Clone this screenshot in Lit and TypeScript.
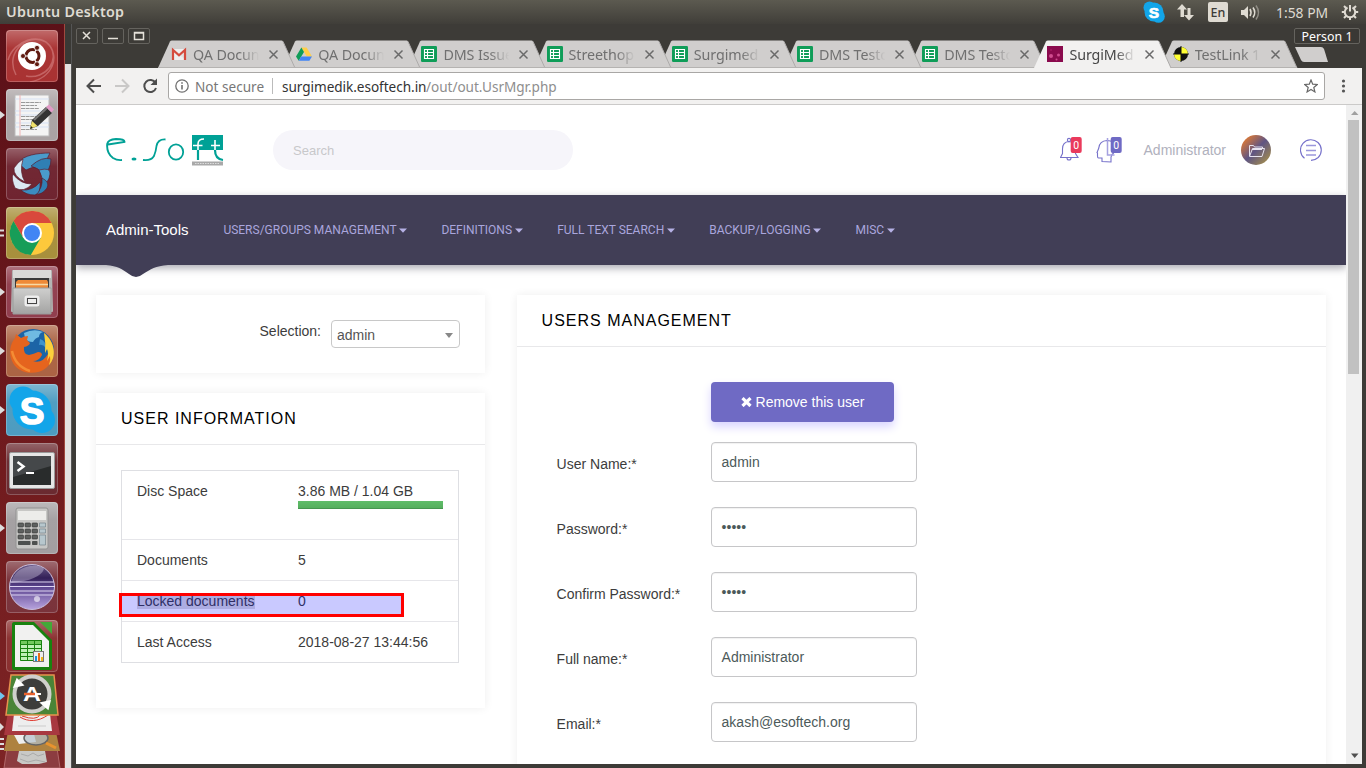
import { LitElement, html, css, svg, TemplateResult } from "lit";
import { customElement, property } from "lit/decorators.js";

const sheet = svg`<rect width="16" height="16" rx="1.2" fill="#0f9d58"/><path d="M3.5 3.5h9v9h-9zM3.5 6.5h9M3.5 9.5h9M6.5 3.5v9" fill="none" stroke="#fff" stroke-width="1.1"/>`;
const gmail = svg`<path d="M1 3h14v11H1z" fill="#eee"/><path d="M1 3l7 6 7-6v11" fill="#d9d9d9" opacity=".6"/><path d="M2 14V4l6 5.3L14 4v10" fill="none" stroke="#d54b3d" stroke-width="2.2"/>`;
const drive = svg`<path d="M5.4 1.5h5.2L16 10.6h-5.2z" fill="#ffcf48"/><path d="M5.4 1.5L0 10.6l2.7 4.2L8 6z" fill="#0f9d58"/><path d="M5.2 10.6H16l-2.6 4.2H2.7z" fill="#4285f4"/>`;
const surgi = svg`<rect width="16" height="16" fill="#8a0a4d"/><circle cx="4" cy="10" r="2" fill="#d04c8f"/><circle cx="11.500" cy="9" r="1.500" fill="#d04c8f"/><circle cx="9.500" cy="13.500" r="1" fill="#d04c8f"/><circle cx="4" cy="4" r=".8" fill="#b5286d"/>`;
const testlink = svg`<circle cx="8" cy="8" r="7" fill="#111"/><path d="M8 8V1A7 7 0 0 1 15 8zM8 8v7A7 7 0 0 1 1 8z" fill="#ff3"/><path d="M8 0v16M0 8h16" stroke="#111" stroke-width="1"/>`;

const TABS: [string, TemplateResult, boolean?][] = [
  ["QA Docun", gmail],
  ["QA Docun", drive],
  ["DMS Issue", sheet],
  ["Streethop", sheet],
  ["Surgimed", sheet],
  ["DMS Testc", sheet],
  ["DMS Testc", sheet],
  ["SurgiMed", surgi, true],
  ["TestLink 1", testlink],
];

@customElement("browser-tab")
class BrowserTab extends LitElement {
  @property() label = "";
  @property({ type: Boolean }) active = false;
  @property({ attribute: false }) icon: TemplateResult | null = null;
  static styles = css`
    :host { display: block; position: relative; width: 138px; height: 28px; margin-right: -12.8px; flex: none; }
    :host(:last-child) { margin-right: 0; }
    .shape { position: absolute; left: 0; top: 0; }
    .row { position: relative; display: flex; align-items: center; height: 28px; padding-left: 13px; }
    .fav { width: 16px; height: 16px; margin-right: 6px; flex: none; }
    .t { width: 69px; overflow: hidden; white-space: nowrap; font: 14.3px "Noto Sans", sans-serif; letter-spacing: -.1px; color: #707070;
      -webkit-mask-image: linear-gradient(90deg, #000 68%, transparent 96%); }
    :host([active]) .t { color: #474747; }
    .x { margin-left: 6px; width: 11px; height: 11px; }
  `;
  render() {
    const fill = this.active ? "#f2f1f0" : "#d0cecd";
    return html`
      <svg class="shape" width="138" height="28"><path d="M0 28L12 1.500Q12.500 .5 14 .5H123.500Q124.500 .5 125 1.500L137 28z" fill=${fill}/>
        <path d="M125 1.500L137 28" stroke="#adabaa" fill="none"/>
        ${this.active ? "" : svg`<path d="M0 27.500H137" stroke="#b5b3b1"/>`}</svg>
      <div class="row"><svg class="fav" viewBox="0 0 16 16">${this.icon}</svg><span class="t">${this.label}</span>
        <svg class="x" viewBox="0 0 11 11"><path d="M1.500 1.500l8 8M9.500 1.500l-8 8" stroke="#6a6a6a" stroke-width="1.500"/></svg></div>`;
  }
}

/* Launcher tiles: background colour, marker on the left edge, drawing on a 52px grid */
const LAUNCHER: [string, string, TemplateResult][] = [
  ["#a93232", "", svg`<path d="M10 45C-2 22 22 2 40 12c16 14 6 36-16 40M2 30C8 10 34 2 44 16s-4 34-24 30" fill="none" stroke="#d98a8a" stroke-width="1.500" opacity=".55"/>
    <circle cx="26" cy="26" r="14" fill="#fff"/><circle cx="26.500" cy="26" r="6.500" fill="none" stroke="#601a10" stroke-width="3"/>
    <path d="M26.500 26H16M26.500 26l5.500-9.500M26.500 26l5.500 9.500" stroke="#fff" stroke-width="1.200"/>
    <g fill="#601a10" stroke="#fff" stroke-width=".8"><circle cx="17" cy="26" r="2.500"/><circle cx="31" cy="17.800" r="2.500"/><circle cx="31" cy="34.200" r="2.500"/></g>`],
  ["#aaa3a4", "a", svg`<rect x="9" y="6" width="34" height="41" fill="#f4f4f4" stroke="#bbb"/><path d="M9 10h34M9 22h34M9 26h34M9 34h34M9 38h34" stroke="#d5e1f4"/><path d="M14 6v41" stroke="#f0b4b4"/>
    <path d="M15 13.500h20M15 16.500h16M15 19.500h18M15 27.500h15M15 30.500h16M15 36.500h10M15 40.500h16" stroke="#999" stroke-width="1" stroke-dasharray="4 .6"/>
    <path d="M24 40l2-9 14-13 6 6-14 13z" fill="#333"/><path d="M28 31l14-13" stroke="#777" stroke-width="2"/><path d="M40 18l3-2.500 5 5-2.500 3z" fill="#e29ac7"/><path d="M24 40l2-8 5.500 5z" fill="#efe06a"/><path d="M24 40l1-3 2 2z" fill="#222"/>`],
  ["#6f2430", "", svg`<g transform="translate(26 27)" stroke="#5c1c2c" stroke-width=".7">
    <path d="M-14-12C-9-20 6-22 18-22Q14-12 5-9-2-7-6-5z" fill="#4a9bcb"/><path d="M-1-9Q10-19 19-16 19-5 11-1 7-7-1-9z" fill="#2f7fb4"/><path d="M7-5Q19-8 18-1 17 8 10 10 11 2 7-5z" fill="#4a9bcb"/><path d="M10 3q8 4 5 10-5 7-11 6 7-6 6-16z" fill="#2f7fb4"/><path d="M8 7q1 11-5 13-9 0-14-5Q1 16 8 7z" fill="#3b8cc0"/>
    <path d="M0 9q-8 9-17 4-4-9-2-14Q-12 9 0 9z" fill="#dbe9f2"/><path d="M-7 7q-12-6-11-14 4-6 9-9-4 13 2 23z" fill="#dbe9f2"/></g>`],
  ["#a8903c", "b", svg`<circle cx="26" cy="26" r="22" fill="#fdc93c"/><path d="M26 16H45.600A22 22 0 0 0 7.500 14L17.300 31z" fill="#d9493c"/><path d="M17.300 31L7.500 14A22 22 0 0 0 24.800 48L34.700 31z" fill="#179d58"/><circle cx="26" cy="26" r="10" fill="#fff"/><circle cx="26" cy="26" r="8" fill="#4285f4"/>`],
  ["#913e4e", "a", svg`<path d="M6 5q0-1 1-1h38q1 0 1 1l1 40q0 1-1 1H6q-1 0-1-1z" fill="#b4b4b3"/><path d="M7 4h38v8H7z" fill="#dadad8"/><rect x="9" y="12" width="34" height="11" fill="#3a3a3a"/><path d="M10 16l2-2h29l1 2v6H10z" fill="#ef8a38"/><path d="M10 18.500h32" stroke="#f7d9a5" stroke-width="1.500"/><path d="M7 22h38v26H7z" fill="url(#gm)" stroke="#9b9b9a"/><rect x="19.500" y="30.500" width="13" height="9" rx="1.500" fill="#ddd" stroke="#eee" stroke-width="2"/><rect x="21.500" y="32.500" width="9" height="5" fill="#eee" stroke="#444"/>`],
  ["#ab6444", "a", svg`<circle cx="27" cy="25" r="21" fill="#1c64a6"/><path d="M18 8q10-5 19-1-4 1-4 5-4 1-6 5-6 0-8-4z" fill="#6fbbe2"/><path d="M34 14q6 2 6 9-3-4-7-3z" fill="#3f94cc"/>
    <path d="M38 8C50 17 51 34 40 43 30 51 13 49 7 38 2 29 4 19 9 13l1-4 5 4q3-2 7-2l-1 4 3 3q-1 3-6 4-1 7 5 8 5-1 9-3 4 0 4 3-3 6-9 6 9 3 15-7 4-9-4-21z" fill="#e5641e"/><path d="M38 8c11 9 13 24 5 32q2-5 1-9l-3 5q2-8 0-12l-2 4q1-10-1-20z" fill="#fbd13c"/><path d="M6 26q3 15 18 20" stroke="#f48c34" stroke-width="2.500" fill="none"/>`],
  ["#4d9cc0", "a", svg`<circle cx="26" cy="26" r="19.500" fill="#12a5e9"/><circle cx="17" cy="16" r="13.500" fill="#12a5e9"/><circle cx="36" cy="36" r="13" fill="#12a5e9"/><text x="26" y="39.500" text-anchor="middle" font-family="Liberation Sans" font-weight="700" font-size="37" fill="#fff" stroke="#fff" stroke-width="1.500" stroke-linejoin="round">S</text>`],
  ["#6b2a30", "", svg`<rect x="3.500" y="9.500" width="45" height="36" rx="1.500" fill="#e6e6e6" stroke="#999"/><rect x="7" y="13" width="38" height="29" fill="#292c2c"/><path d="M7 13h38v10L7 34z" fill="#45484a"/><path d="M11.500 19l6 4.500-6 4.500" fill="none" stroke="#fff" stroke-width="2.500"/><path d="M20 30h8" stroke="#fff" stroke-width="2"/>`],
  ["#a39fa1", "a", svg`<rect x="10" y="6" width="32" height="41" rx="2" fill="#c7c7c5" stroke="#929292"/><rect x="12" y="9" width="28" height="9" fill="#ececea"/>${[0, 1, 2].map(r => [0, 1, 2].map(c => svg`<rect x=${12 + c * 7} y=${21 + r * 6} width="5.500" height="4" rx=".8" fill="#5d605f" stroke="#303030" stroke-width=".6"/>`))}<rect x="12" y="39" width="12.500" height="4" rx=".8" fill="#4d504f"/><rect x="26" y="39" width="5.500" height="4" rx=".8" fill="#4d504f"/><path d="M33.500 21h6v4h-6zM33.500 27h6v4h-6zM33.500 33h6v10h-6z" fill="#b7c7cd" stroke="#75858c" stroke-width=".7"/>`],
  ["#7a333b", "", svg`<circle cx="26" cy="26" r="22.500" fill="url(#ec)" stroke="#c9bedb"/><path d="M4 21h44M4 25.500h45M4 30h44M5 34h42" stroke="#ded5f2" stroke-width="1.200"/><path d="M5 22Q8 8 24 5q10-1 14 3-4 11-33 14z" fill="#ece5f5" opacity=".35"/><circle cx="31" cy="38" r="3" fill="#fff" opacity=".6"/>`],
  ["#8a3030", "", svg`<path d="M6 4q0-2 2-2h20l18 18v28q0 2-2 2H8q-2 0-2-2z" fill="#18820f"/><path d="M34 2h12v12z" fill="#43a838"/><path d="M9 5h18l16 16v26H9z" fill="#f1f1f0"/><path d="M14 20h22v21H14z" fill="#bff0b7"/><path d="M14 20h22v4H14z" fill="#72c95e"/><path d="M14.500 20.500h21v20h-21zM14 24.500h22M14 28.500h22M14 32.500h22M14 36.500h22M21.500 20v21M28.500 20v21" fill="none" stroke="#18820f"/><rect x="27.500" y="31.500" width="10" height="10" fill="#eee" stroke="#777"/><path d="M29 36h2v5h-2z" fill="#1793dc"/><path d="M32 33h2v8h-2z" fill="#e66b18"/><path d="M35 37h2v4h-2z" fill="#f1b619"/>`],
];

@customElement("app-launcher")
class AppLauncher extends LitElement {
  static styles = css`
    :host { display: block; width: 64px; height: 744px; flex: none; border-right: 1px solid #a0493f;
      background: linear-gradient(#5c1118, #66161b 35%, #711b1e 60%, #7d2425); overflow: hidden; }
    .item { display: flex; align-items: center; height: 59px; }
    .list { padding-top: 2px; }
    .mark { width: 6px; height: 12px; }
    .tile { display: block; }
    .stack { display: block; margin-top: -5px; }
  `;
  render() {
    return html`<div class="list">
      ${LAUNCHER.map(([bg, m, pic]) => html`<div class="item">
        <svg class="mark" viewBox="0 0 6 12">${m === "a" ? svg`<path d="M0 2l5 4-5 4z" fill="#ddd"/>` : m === "b" ? svg`<path d="M0 3.500h4M0 8.500h4" stroke="#ddd" stroke-width="2.200"/>` : ""}</svg>
        <svg class="tile" width="52" height="52" viewBox="0 0 52 52">
          <defs><linearGradient id="gm" x2="0" y2="1"><stop stop-color="#cfcfce"/><stop offset="1" stop-color="#a3a3a2"/></linearGradient>
          <linearGradient id="ec" x2="0" y2="1"><stop stop-color="#6a5a88"/><stop offset=".3" stop-color="#332058"/><stop offset=".5" stop-color="#5d4690"/><stop offset="1" stop-color="#b7a3de"/></linearGradient>
          <linearGradient id="sh" x2="0" y2="1"><stop stop-color="#fff" stop-opacity=".28"/><stop offset=".35" stop-color="#fff" stop-opacity=".02"/><stop offset="1" stop-color="#fff" stop-opacity="0"/></linearGradient></defs>
          <rect width="52" height="52" rx="4" fill=${bg}/><rect width="52" height="52" rx="4" fill="url(#sh)"/>
          <rect x=".5" y=".5" width="51" height="51" rx="3.500" fill="none" stroke="#fff" stroke-opacity=".22"/>${pic}</svg></div>`)}
      </div>
      <svg class="stack" width="64" height="98" viewBox="0 670 64 98">
        <path d="M7 748H57L60 768H4z" fill="#8c3c40" stroke="#b1686a"/><path d="M19 751l26 0 2 11-8 2H22l-5-3z" fill="#c9c9c6"/><path d="M21 754l7 2 5-3 5 3 6-2M20 759l8 3 8-2 9 2" stroke="#aaa" fill="none"/>
        <path d="M8 732H56L60 751H4z" fill="#ae8240"/><path d="M14 735l20-1 2 8-17 2z" fill="#eee"/><ellipse cx="36" cy="738" rx="12" ry="7" fill="#b4c1cb" fill-opacity=".7" stroke="#666" stroke-width="1.500"/><path d="M46 743l10 5" stroke="#e8932e" stroke-width="3"/>
        <path d="M8 712H56L60 735H4z" fill="#a83840"/><path d="M14 714H50L52 731H12z" fill="#eee"/><path d="M20 717c8 5 18 5 28-2M22 716q14 5 18-1" fill="none" stroke="#e03a30"/><path d="M18 726h28" stroke="#ccc"/>
        <path d="M11 675H54L58 715H6z" fill="#4a8437" stroke="#e8924e" stroke-width="1.500"/><circle cx="32" cy="694" r="17.500" fill="#3d3d3b" stroke="#cfcfcc" stroke-width="4"/><path d="M14 687l3-8 6 6zM50 701l-2 8-7-6z" fill="#fff" stroke="#fff" stroke-width="1.500"/><text x="32" y="700.500" text-anchor="middle" font-family="Liberation Sans" font-weight="700" font-size="20" textLength="18" lengthAdjust="spacingAndGlyphs" fill="#fff">A</text><path d="M24 694h11" stroke="#e9632e" stroke-width="2.500"/><path d="M35 694h6" stroke="#fff" stroke-width="2"/>
        <path d="M0 692l5 4-5 4z" fill="#6fc6ee"/><path d="M0 723l4 4-4 4z" fill="#ddd"/><path d="M0 739h4M0 744h4M0 749h4" stroke="#ddd" stroke-width="1.800"/>
      </svg>`;
  }
}

@customElement("admin-page")
class AdminPage extends LitElement {
  static styles = css`
    :host { display: block; flex: 1; min-width: 0; height: 659px; overflow: hidden; background: #fff; font: 14px/20px "Liberation Sans", Arial, sans-serif; color: #3c3c3c; }
    .head { display: flex; align-items: center; height: 90px; padding: 0 24px 0 30px; box-sizing: border-box; }
    .logo { display: block; flex: none; }
    .search { width: 280px; height: 40px; line-height: 42px; margin-left: 49px; padding-left: 20px; border-radius: 20px; background: #f6f5fa; color: #c8c8ca; font-size: 13px; }
    .tools { display: flex; align-items: center; margin-left: auto; }
    .user { margin-left: 18px; margin-right: 15px; color: #b0b1bd; }
    .burger { margin-left: 29px; }
    .nav { position: relative; display: flex; align-items: center; height: 70px; padding-left: 30px; background: #413e56; box-shadow: 0 3px 8px rgba(40, 40, 60, .4); }
    .brand { color: #fff; font-size: 15px; width: 117.4px; }
    .menu { display: flex; align-items: center; color: #aaa6dd; font: 12px Roboto, sans-serif; white-space: nowrap; }
    .menu svg { margin-left: 2.500px; }
    .bump { position: absolute; left: 30px; top: 69px; }
    .cols { display: flex; align-items: flex-start; gap: 31.6px; padding: 30px 20px; }
    .left { width: 389px; flex: none; display: grid; gap: 20px; }
    .card { background: #fff; box-shadow: 0 0 9px rgba(0, 0, 0, .07); }
    .sel { height: 78px; display: flex; justify-content: flex-end; padding: 25px 25px 0 0; box-sizing: border-box; gap: 10px; }
    .sel label { line-height: 22px; }
    .select { display: flex; align-items: center; justify-content: space-between; width: 129px; height: 28px; padding: 2px 6px 0 5px; box-sizing: border-box; border: 1px solid #c8c8c8; border-radius: 4px; color: #555; }
    h2 { margin: 0; height: 51px; line-height: 51px; padding-left: 25px; border-bottom: 1px solid #e8e8ea; color: #000; font-size: 16px; font-weight: 400; letter-spacing: 1px; }
    .info { height: 315px; }
    .table { margin: 25px 26px 0 25px; border: 1px solid #dedfe3; }
    .tr { display: grid; grid-template-columns: 146px 145px; gap: 15px; padding: 10px 15px; }
    .tr + .tr { border-top: 1px solid #e6e6ea; }
    .bar { height: 8px; margin-bottom: 20px; background: linear-gradient(#5fbd69, #54ad5c); box-shadow: inset 0 -1px 0 #469650; }
    .mark { background: #dadada; }
    .right { width: 809px; flex: none; height: 600px; }
    .form { display: grid; grid-template-columns: 154.4px 206px; grid-template-rows: 35px; grid-auto-rows: 40px; padding: 35px 40px; row-gap: 25px; }
    .btn { grid-column: 2; width: 183px; height: 40px; display: flex; align-items: center; justify-content: center; gap: 4px; border-radius: 4px; background: #6f6ac4; color: #fff; box-shadow: 0 5px 10px #d9d4ff; }
    .form label { line-height: 44px; }
    .input { height: 40px; line-height: 38px; box-sizing: border-box; border: 1px solid #c6c6c8; border-radius: 4px; padding-left: 9.6px; color: #4c5a5a; box-shadow: inset 0 1px 1px rgba(0, 0, 0, .06); }
  `;
  item(t: string, w: number) {
    return html`<div class="menu" style="width:${w}px">${t}<svg width="8" height="5"><path d="M0 .5h8L4 4.800z" fill="#b6b2e6"/></svg></div>`;
  }
  field(l: string, v: string) {
    return html`<label>${l}</label><div class="input">${v}</div>`;
  }
  render() {
    return html`
      <div class="head">
        <svg class="logo" width="118" height="31" viewBox="0 0 118 31">
          <g fill="none" stroke="#00a196"><path d="M2 9.500L18.500 7Q19 4 10 4 2 4.500 1.200 9q-.8 9 5.800 14 4 2.500 9 2" stroke-width="1.900"/><path d="M37 25q8 1 11-4 2-5 2.500-10Q52 4 59.500 4.500" stroke-width="1.800"/><ellipse cx="70" cy="17" rx="7.200" ry="7.600" stroke-width="1.800"/></g>
          <ellipse cx="28" cy="24" rx="2.500" ry="1.500" fill="#00a196"/>
          <path d="M86 0h31v15H86z" fill="#00a196"/>
          <path d="M92 15V9q0-5 6-5M87 10.500h9.500M109 15V5M105 10.500h9" fill="none" stroke="#fff" stroke-width="1.600"/>
          <path d="M92 15V25M109 15q0 9 8 10" fill="none" stroke="#00a196" stroke-width="2.200"/>
          <path d="M86 26.500h31v4H86z" fill="#a9a9a9"/><path d="M89 28.500h25" stroke="#ddd" stroke-dasharray="1.500 1"/>
        </svg>
        <div class="search">Search</div>
        <div class="tools">
          <svg width="66" height="30" viewBox="0 0 66 30" font-family="Roboto" font-size="10.500" fill="#fff" text-anchor="middle">
            <g fill="none" stroke="#7671ca" stroke-width="1.100"><path d="M.5 22.500h17.500L15.500 18.500V14q0-7-6.500-7.500Q2.500 7 2.500 14v4.500z"/><path d="M7 23a2 2 0 0 0 4 0"/><circle cx="9" cy="5" r="1.600"/>
            <path d="M42 26.500v-3.500h-3.500q-1 0-1-2v-3l-.5-.5 1.800-4.500Q39.500 6 47 5.500q8 0 8 8 0 4-3 6l-1 2.500v5z"/><path d="M47.500 3v17h7" stroke="#a5a1e0" stroke-width="1.500"/></g>
            <rect x="10.700" y="2" width="11" height="16" rx="2" fill="#ea3a5c"/><rect x="50.700" y="2" width="11" height="16" rx="2" fill="#6f6ac4"/>
            <text x="16.200" y="14">0</text><text x="56.200" y="14">0</text>
          </svg>
          <span class="user">Administrator</span>
          <svg width="30" height="30"><defs><linearGradient id="av" x2="1" y2="1"><stop offset=".1" stop-color="#e27a32"/><stop offset=".5" stop-color="#5f5583"/><stop offset="1" stop-color="#b29a42"/></linearGradient></defs>
            <circle cx="15" cy="15" r="15" fill="url(#av)"/><path d="M8.500 21.500V10.500h4l1 1.500h8v2M8.500 21.500l3-8h12l-2.500 8h-12M11 14.500h10" fill="none" stroke="#e6e2ee"/></svg>
          <svg class="burger" width="22" height="22" fill="none" stroke="#7671ca" stroke-width="1.100"><path d="M4.500 19.300A10.400 10.400 0 1 1 18.200 18.500Q15 21.400 11 21.400"/><path d="M6 6.500h10M6 11.500h10M6 16h10" stroke="#9b97dc" stroke-width="1.300"/></svg>
        </div>
      </div>
      <div class="nav">
        <span class="brand">Admin-Tools</span>
        ${this.item("USERS/GROUPS MANAGEMENT", 218)}${this.item("DEFINITIONS", 115.8)}${this.item("FULL TEXT SEARCH", 152)}${this.item("BACKUP/LOGGING", 146.3)}${this.item("MISC", 60)}
        <svg class="bump" width="62" height="14"><path d="M0 1C12 2 16 5 23 10q7 6 14 0C45 5 49 2 62 1z" fill="#413e56"/></svg>
      </div>
      <div class="cols">
        <div class="left">
          <div class="card sel"><label>Selection:</label><div class="select">admin<svg width="8" height="5"><path d="M0 0h8L4 5z" fill="#888"/></svg></div></div>
          <div class="card info"><h2>USER INFORMATION</h2>
            <div class="table">
              <div class="tr"><span>Disc Space</span><div>3.86 MB / 1.04 GB<div class="bar"></div></div></div>
              <div class="tr"><span>Documents</span><span>5</span></div>
              <div class="tr"><span><span class="mark">Locked documents</span></span><span>0</span></div>
              <div class="tr"><span>Last Access</span><span>2018-08-27 13:44:56</span></div>
            </div>
          </div>
        </div>
        <div class="card right"><h2>USERS MANAGEMENT</h2>
          <div class="form">
            <div class="btn"><svg width="11" height="10" viewBox="0 0 11 10"><path d="M1.500 1.200l8 7.800M9.500 1.200l-8 7.800" stroke="#fff" stroke-width="3.200"/></svg>Remove this user</div>
            ${this.field("User Name:*", "admin")}${this.field("Password:*", "•••••")}${this.field("Confirm Password:*", "•••••")}${this.field("Full name:*", "Administrator")}${this.field("Email:*", "akash@esoftech.org")}
          </div>
        </div>
      </div>`;
  }
}

@customElement("app-root")
class AppRoot extends LitElement {
  static styles = css`
    :host { display: block; position: relative; width: 1366px; height: 768px; overflow: hidden; font-family: "Noto Sans", sans-serif; }
    .panel { display: flex; align-items: center; height: 24px; padding: 0 7px 0 6px; box-sizing: border-box; background: linear-gradient(#5c5a50, #403e39); color: #dfdbd2; font-size: 13.9px; }
    .panel b { font-size: 14.3px; font-weight: 600; letter-spacing: .28px; line-height: 24px; }
    .tray { display: flex; align-items: center; margin-left: auto; height: 24px; }
    .time { margin: 0 12px 0 14px; width: 53px; white-space: nowrap; }
    .main { display: flex; height: 744px; }
    .gap { width: 6px; flex: none; background: linear-gradient(#3a3935 40px, #e4e2e1 40px); }
    .win { flex: 1; min-width: 0; box-sizing: border-box; height: 744px; padding: 0 4px 4px 4px; background: #3d3b37; border-left: 1px solid #555; }
    .strip { display: flex; height: 44px; box-sizing: border-box; }
    .btns { display: flex; gap: 4px; padding-top: 4px; width: 82px; flex: none; }
    .tabs { display: flex; padding-top: 16px; height: 28px; flex: none; }
    .new { margin: 23px 0 0 -2.500px; flex: none; }
    .person { position: absolute; left: 1294px; top: 28px; width: 66px; height: 16px; box-sizing: border-box; border: 1px solid #65635e; border-radius: 2px; color: #fff; font-size: 12.4px; line-height: 15px; text-align: center; background: #3a3834; white-space: nowrap; }
    .bar { display: flex; align-items: center; height: 36px; background: #f2f1f0; border-bottom: 1px solid #cbcac9; }
    .url { display: flex; align-items: center; width: 1157px; height: 28px; box-sizing: border-box; border: 1px solid #a9a7a5; border-radius: 3px; background: #fff; padding: 0 6px; font-size: 13.6px; color: #333; white-space: nowrap; }
    .ns { color: #777; margin-left: 6px; width: 77px; }
    .sep { width: 1px; height: 16px; background: #bbb; margin-right: 9px; }
    .host { width: 144px; letter-spacing: -.05px; }
    .path { color: #8e8e8e; flex: 1; letter-spacing: -.05px; }
    .view { display: flex; height: 659px; background: #fff; }
    .scroll { width: 16px; flex: none; display: flex; flex-direction: column; align-items: center; background: #f0f0f0; }
    .thumb { width: 11px; height: 254px; background: #c1c1c1; margin: 0 1px auto 0; }
    .note { position: absolute; left: 119px; top: 593px; width: 285px; height: 24px; box-sizing: border-box; border: 3px solid #f00; background: rgba(0, 0, 255, .21); }
  `;
  render() {
    return html`
      <div class="panel"><b>Ubuntu Desktop</b>
        <div class="tray">
          <svg width="196" height="24" viewBox="0 0 196 24">
            <g transform="translate(74)"><circle cx="14" cy="12" r="9.500" fill="#12a5e9"/><circle cx="9.500" cy="7.500" r="6" fill="#12a5e9"/><circle cx="18.500" cy="16.500" r="6.300" fill="#12a5e9"/><text x="14" y="17.500" text-anchor="middle" font-family="Liberation Sans" font-weight="700" font-size="15.500" fill="#fff" stroke="#fff" stroke-width=".7">S</text></g>
            <path d="M114.500 17V9.500H111l5-5.500 5 5.500h-3v7.500zM121.500 8h3v7h3.500l-5 5.500-5-5.500h3.500z" fill="#dfdbd2"/>
            <rect x="142" y="2" width="20" height="20" rx="2" fill="#dfdbd2"/><text x="152" y="17" font-family="Noto Sans" font-size="12.500" fill="#3c3b37" text-anchor="middle" font-weight="500">En</text>
            <path d="M175 10h3l4-4v13l-4-4h-3z" fill="#dfdbd2"/><path d="M184 9q2 3.500 0 7M187 7.500q3.500 5 0 10" stroke="#dfdbd2" stroke-width="1.600" fill="none"/><path d="M190 5.500q5 7 0 14" stroke="#908d85" stroke-width="1.500" fill="none"/>
          </svg>
          <span class="time">1:58 PM</span>
          <svg width="18" height="18" viewBox="0 0 18 18" fill="none" stroke="#dfdbd2"><path d="M6.500 4.500A5.200 5.200 0 1 0 11.500 4.500" stroke-width="2"/><path d="M9 2v6.500" stroke-width="2"/><path d="M3.500 9H.8M17.200 9h-2.700M5 13l-2 2M13 13l2 2M5 5L3 3M13 5l2-2M9 14.500V17" stroke-width="2"/></svg>
        </div>
      </div>
      <div class="main">
        <app-launcher></app-launcher>
        <div class="gap"></div>
        <div class="win">
          <div class="strip">
            <div class="btns">${["M7 4l7 7M14 4l-7 7", "M6 10.500h10", "M6.500 4.500h9v7h-9zM6 5h10"].map(d => html`<svg width="22" height="16" fill="none"><rect x=".5" y=".5" width="21" height="15" rx="1.500" stroke="#65635e"/><path d=${d} stroke="#e4e0d8" stroke-width="1.500"/></svg>`)}</div>
            <div class="tabs">${TABS.map(([t, ic, a], i) => html`<browser-tab style="z-index:${a ? 20 : 10 - i}" .label=${t} .icon=${ic} ?active=${!!a}></browser-tab>`)}</div>
            <svg class="new" width="33" height="15"><path d="M0 0h26q2 0 3 2l4 13H9q-2 0-3-2z" fill="#d0cecd"/></svg>
          </div>
          <div class="bar">
            <svg width="92" height="36" viewBox="0 0 92 36" fill="none" stroke="#4d4d4d" stroke-width="2"><path d="M25 18H12M18 11.500L11.500 18l6.500 6.500"/><path d="M39 18h13M46 11.500l6.500 6.500-6.500 6.500" stroke="#c9c8c7"/><path d="M79.500 15A6 6 0 1 0 80 20"/><path d="M81 10.500v6.500h-6.500z" fill="#4d4d4d" stroke="none"/></svg>
            <div class="url">
              <svg width="14" height="14" fill="none" stroke="#707070"><circle cx="7" cy="7" r="6.200" stroke-width="1.300"/><path d="M7 6v4.500M7 3.200v1.600" stroke-width="1.600"/></svg>
              <span class="ns">Not secure</span><span class="sep"></span><span class="host">surgimedik.esoftech.in</span><span class="path">/out/out.UsrMgr.php</span>
              <svg width="14" height="14" viewBox="0 0 14 14"><path d="M7 1l1.700 4.200 4.600.3-3.500 3 1.100 4.400L7 10.500l-3.900 2.400 1.100-4.400-3.500-3 4.600-.3z" fill="none" stroke="#666" stroke-width="1.200"/></svg>
            </div>
            <svg width="37" height="16"><g fill="#555"><circle cx="18.500" cy="3" r="1.600"/><circle cx="18.500" cy="8" r="1.600"/><circle cx="18.500" cy="13" r="1.600"/></g></svg>
          </div>
          <div class="view"><admin-page></admin-page>
            <div class="scroll"><svg width="15" height="15"><path d="M4 10h7.500L7.700 6z" fill="#a0a0a0"/></svg><div class="thumb"></div><svg width="15" height="15"><path d="M4 4.500h7.500L7.700 9z" fill="#505050"/></svg></div>
          </div>
        </div>
      </div>
      <div class="person">Person 1</div>
      <div class="note"></div>`;
  }
}
